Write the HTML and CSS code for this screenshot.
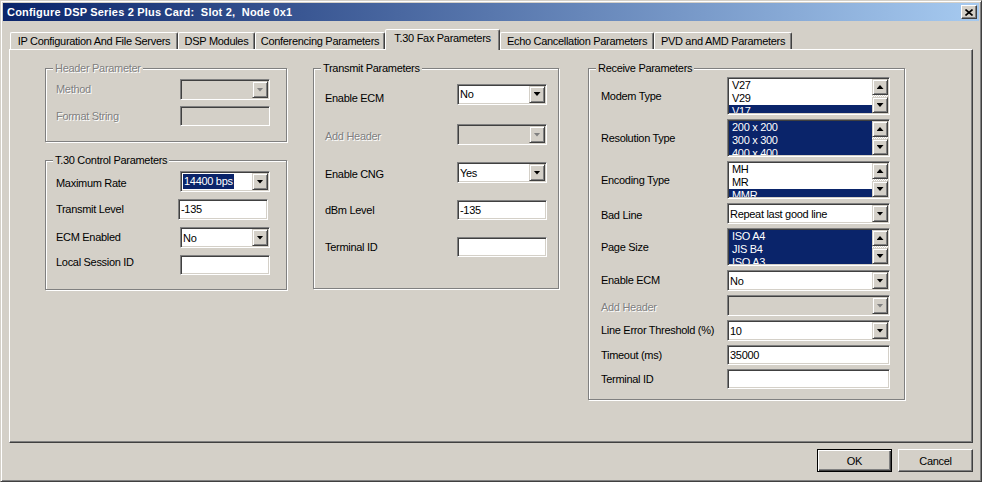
FILE: index.html
```html
<!DOCTYPE html>
<html>
<head>
<meta charset="utf-8">
<title>Configure DSP Series 2 Plus Card</title>
<link rel="stylesheet" href="styles.css">
</head>
<body>
<div class="window">
  <div class="titlebar">
    <span class="title">Configure DSP Series 2 Plus Card:&nbsp; Slot 2,&nbsp; Node 0x1</span>
    <div class="close"><svg width="8" height="7" viewBox="0 0 8 7"><path d="M0.5 0.5L7.5 6.5M7.5 0.5L0.5 6.5" stroke="#000" stroke-width="1.6" fill="none"/></svg></div>
  </div>
  <div class="client">
    <div class="tabs">
      <div class="tab w-ip">IP Configuration And File Servers</div>
      <div class="tab w-dsp">DSP Modules</div>
      <div class="tab w-conf">Conferencing Parameters</div>
      <div class="tab w-fax active">T.30 Fax Parameters</div>
      <div class="tab w-echo">Echo Cancellation Parameters</div>
      <div class="tab w-pvd">PVD and AMD Parameters</div>
    </div>
    <div class="panel">
      <div class="col col-left">
        <div class="group g-header">
          <div class="legend disabled">Header Parameter</div>
          <div class="form f-header">
            <div class="row">
              <span class="lbl disabled">Method</span>
              <div class="combo off"><span class="val"></span><span class="drop"><i class="arr"></i></span></div>
            </div>
            <div class="row">
              <span class="lbl disabled">Format String</span>
              <div class="edit off"></div>
            </div>
          </div>
        </div>
        <div class="group g-t30">
          <div class="legend">T.30 Control Parameters</div>
          <div class="form f-t30">
            <div class="row">
              <span class="lbl low">Maximum Rate</span>
              <div class="combo"><span class="val"><span class="hl">14400 bps</span></span><span class="drop"><i class="arr"></i></span></div>
            </div>
            <div class="row">
              <span class="lbl">Transmit Level</span>
              <div class="edit tall shift">-135</div>
            </div>
            <div class="row">
              <span class="lbl">ECM Enabled</span>
              <div class="combo"><span class="val">No</span><span class="drop"><i class="arr"></i></span></div>
            </div>
            <div class="row">
              <span class="lbl high">Local Session ID</span>
              <div class="edit"></div>
            </div>
          </div>
        </div>
      </div>

      <div class="col col-mid">
        <div class="group g-tx">
          <div class="legend">Transmit Parameters</div>
          <div class="form f-tx">
            <div class="row first">
              <span class="lbl lower">Enable ECM</span>
              <div class="combo"><span class="val">No</span><span class="drop"><i class="arr"></i></span></div>
            </div>
            <div class="row">
              <span class="lbl disabled low">Add Header</span>
              <div class="combo off"><span class="val"></span><span class="drop"><i class="arr"></i></span></div>
            </div>
            <div class="row">
              <span class="lbl low">Enable CNG</span>
              <div class="combo"><span class="val">Yes</span><span class="drop"><i class="arr"></i></span></div>
            </div>
            <div class="row">
              <span class="lbl">dBm Level</span>
              <div class="edit">-135</div>
            </div>
            <div class="row">
              <span class="lbl">Terminal ID</span>
              <div class="edit"></div>
            </div>
          </div>
        </div>
      </div>

      <div class="col col-right">
        <div class="group g-rx">
          <div class="legend">Receive Parameters</div>
          <div class="form f-rx">
            <div class="row">
              <span class="lbl">Modem Type</span>
              <div class="list">
                <div class="items"><div>V27</div><div>V29</div><div class="sel">V17</div></div>
                <div class="vscroll"><span class="sbtn"><i class="arr up"></i></span><span class="track"></span><span class="sbtn"><i class="arr"></i></span></div>
              </div>
            </div>
            <div class="row">
              <span class="lbl">Resolution Type</span>
              <div class="list">
                <div class="items"><div class="sel">200 x 200</div><div class="sel">300 x 300</div><div class="sel">400 x 400</div></div>
                <div class="vscroll"><span class="sbtn"><i class="arr up"></i></span><span class="track"></span><span class="sbtn"><i class="arr"></i></span></div>
              </div>
            </div>
            <div class="row">
              <span class="lbl">Encoding Type</span>
              <div class="list">
                <div class="items"><div>MH</div><div>MR</div><div class="sel">MMR</div></div>
                <div class="vscroll"><span class="sbtn"><i class="arr up"></i></span><span class="track"></span><span class="sbtn"><i class="arr"></i></span></div>
              </div>
            </div>
            <div class="row">
              <span class="lbl low">Bad Line</span>
              <div class="combo"><span class="val">Repeat last good line</span><span class="drop"><i class="arr"></i></span></div>
            </div>
            <div class="row">
              <span class="lbl">Page Size</span>
              <div class="list">
                <div class="items"><div class="sel">ISO A4</div><div class="sel">JIS B4</div><div class="sel">ISO A3</div></div>
                <div class="vscroll"><span class="sbtn"><i class="arr up"></i></span><span class="track"></span><span class="sbtn"><i class="arr"></i></span></div>
              </div>
            </div>
            <div class="row">
              <span class="lbl">Enable ECM</span>
              <div class="combo"><span class="val">No</span><span class="drop"><i class="arr"></i></span></div>
            </div>
            <div class="row">
              <span class="lbl disabled low">Add Header</span>
              <div class="combo off"><span class="val"></span><span class="drop"><i class="arr"></i></span></div>
            </div>
            <div class="row">
              <span class="lbl">Line Error Threshold (%)</span>
              <div class="combo"><span class="val">10</span><span class="drop"><i class="arr"></i></span></div>
            </div>
            <div class="row">
              <span class="lbl">Timeout (ms)</span>
              <div class="edit">35000</div>
            </div>
            <div class="row">
              <span class="lbl">Terminal ID</span>
              <div class="edit"></div>
            </div>
          </div>
        </div>
      </div>
    </div>
    <div class="buttons">
      <div class="btn default">OK</div>
      <div class="btn">Cancel</div>
    </div>
  </div>
</div>
</body>
</html>
```

FILE: styles.css
```css
* { box-sizing: border-box; }
html, body { margin: 0; padding: 0; }
body {
  background: #d4d0c8;
  font-family: "Liberation Sans", Arial, sans-serif;
  font-size: 11px;
  letter-spacing: -0.3px;
  color: #000;
}

.window {
  width: 982px;
  height: 482px;
  background: #d4d0c8;
  border: 1px solid;
  border-color: #d4d0c8 #404040 #404040 #d4d0c8;
  box-shadow: inset 1px 1px #fff, inset -1px -1px #808080;
  padding: 2px;
  display: flex;
  flex-direction: column;
}

.titlebar {
  height: 18px;
  flex: none;
  background: linear-gradient(90deg, #0a246a, #a6caf0);
  display: flex;
  align-items: center;
  padding: 0 2px 0 4px;
}
.title {
  flex: 1;
  color: #fff;
  font-weight: bold;
  letter-spacing: 0.2px;
  white-space: nowrap;
}
.close {
  width: 16px;
  height: 14px;
  background: #d4d0c8;
  border: 1px solid;
  border-color: #fff #404040 #404040 #fff;
  box-shadow: inset -1px -1px #808080;
  display: flex;
  align-items: center;
  justify-content: center;
}

.client {
  flex: 1;
  padding: 8px 6px 7px 6px;
  display: flex;
  flex-direction: column;
}

.tabs {
  height: 20px;
  flex: none;
  display: flex;
  align-items: flex-end;
  padding-left: 1px;
}
.tab {
  flex: none;
  height: 17px;
  border: 1px solid;
  border-bottom: none;
  border-color: #fff #404040 transparent #fff;
  border-radius: 2px 2px 0 0;
  box-shadow: inset -1px 0 #808080;
  text-align: center;
  line-height: 16px;
  white-space: nowrap;
}
.tab.active {
  height: 21px;
  margin-bottom: -1px;
  position: relative;
  z-index: 1;
  background: #d4d0c8;
  line-height: 17px;
}
.w-ip { width: 168px; }
.w-dsp { width: 77px; }
.w-conf { width: 130px; }
.w-fax { width: 115px; }
.w-echo { width: 154px; }
.w-pvd { width: 138px; }

.panel {
  height: 394px;
  flex: none;
  border: 1px solid;
  border-color: #fff #404040 #404040 #fff;
  box-shadow: inset -1px -1px #808080;
  padding: 18px 0 0 35px;
  display: flex;
  align-items: flex-start;
}
.col { flex: none; display: flex; flex-direction: column; }
.col-left { width: 242px; margin-right: 26px; gap: 18px; }
.col-mid { width: 246px; margin-right: 29px; }
.col-right { width: 317px; }

.group {
  border: 1px solid #808080;
  box-shadow: inset 1px 1px #fff, 1px 1px #fff;
}
.g-header { height: 74px; }
.g-t30 { height: 130px; }
.g-tx { height: 221px; }
.g-rx { height: 332px; }

.legend {
  width: max-content;
  margin: -7px 0 -6px 7px;
  padding: 0 2px;
  background: #d4d0c8;
  line-height: 13px;
  white-space: nowrap;
}

.form { display: flex; flex-direction: column; }
.row { display: flex; align-items: center; }
.lbl { flex: none; white-space: nowrap; line-height: 13px; }
.lbl.low { padding-top: 4px; }
.lbl.lower { padding-top: 9px; }
.lbl.high { padding-bottom: 6px; }

.f-header { padding: 10px 0 0 10px; gap: 6px; }
.f-header .lbl { width: 124px; }
.f-header .combo, .f-header .edit { width: 90px; }

.f-t30 { padding: 10px 0 0 10px; gap: 7px; }
.f-t30 .lbl { width: 124px; }
.f-t30 .combo, .f-t30 .edit { width: 90px; }

.f-tx { padding: 14px 0 0 11px; gap: 17px; }
.f-tx .row.first { margin-bottom: 2px; }
.f-tx .lbl { width: 132px; }
.f-tx .combo, .f-tx .edit { width: 90px; }

.f-rx { padding: 8px 0 0 12px; gap: 4px; }
.f-rx .lbl { width: 126px; }
.f-rx .combo, .f-rx .edit, .f-rx .list { width: 163px; }

.disabled {
  color: #808080;
  text-shadow: 1px 1px 0 #fff;
}

.combo, .edit, .list {
  border: 1px solid;
  border-color: #808080 #fff #fff #808080;
  box-shadow: inset 1px 1px #404040, inset -1px -1px #d4d0c8;
  padding: 1px;
  background: #fff;
}
.combo {
  height: 21px;
  display: flex;
}
.combo .val {
  flex: 1;
  display: flex;
  align-items: center;
  padding-left: 1px;
  white-space: nowrap;
  overflow: hidden;
}
.hl {
  background: #0a246a;
  color: #fff;
  line-height: 15px;
  padding: 0 1px;
}
.drop, .sbtn {
  flex: none;
  width: 16px;
  background: #d4d0c8;
  border: 1px solid;
  border-color: #d4d0c8 #404040 #404040 #d4d0c8;
  box-shadow: inset 1px 1px #fff, inset -1px -1px #808080;
  display: flex;
  align-items: center;
  justify-content: center;
}
.arr {
  display: block;
  width: 7px;
  height: 4px;
  background: #000;
  clip-path: polygon(0 0, 100% 0, 50% 100%);
}
.arr.up { clip-path: polygon(50% 0, 100% 100%, 0 100%); }
.combo.off { background: #d4d0c8; }
.combo.off .arr {
  background: #808080;
  filter: drop-shadow(1px 1px 0 #fff);
}

.edit {
  height: 20px;
  line-height: 16px;
  padding-left: 2px;
  white-space: nowrap;
}
.edit.tall { height: 21px; line-height: 17px; }
.edit.shift { margin-left: -2px; }
.edit.off { background: #d4d0c8; }

.list {
  height: 38px;
  display: flex;
}
.items {
  flex: 1;
  overflow: hidden;
  line-height: 13px;
}
.items div { padding-left: 3px; white-space: nowrap; }
.items .sel { background: #0a246a; color: #fff; }
.vscroll {
  flex: none;
  width: 16px;
  display: flex;
  flex-direction: column;
}
.sbtn { height: 16px; }
.track {
  flex: 1;
  background: repeating-conic-gradient(#fff 0 25%, #d4d0c8 0 50%) 0 0 / 2px 2px;
}

.buttons {
  flex: none;
  height: 23px;
  margin-top: 6px;
  display: flex;
  justify-content: flex-end;
  gap: 6px;
}
.btn {
  width: 75px;
  height: 23px;
  border: 1px solid;
  border-color: #fff #404040 #404040 #fff;
  box-shadow: inset -1px -1px #808080;
  display: flex;
  align-items: center;
  justify-content: center;
}
.btn.default {
  border-color: #000;
  box-shadow: inset 1px 1px #fff, inset -1px -1px #404040, inset -2px -2px #808080;
}
```
